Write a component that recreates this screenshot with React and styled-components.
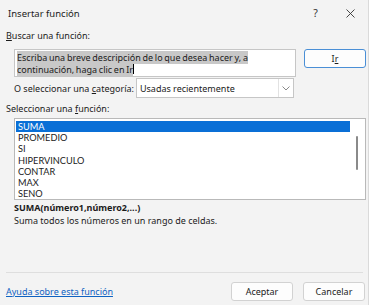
import React, { useState } from "react";
import styled, { createGlobalStyle } from "styled-components";

const GlobalStyle = createGlobalStyle`
  html, body {
    margin: 0;
    padding: 0;
    background: #ffffff;
  }
  body {
    font-family: "Noto Sans", "Open Sans", sans-serif;
    font-size: 9px;
    color: #1b1b1b;
  }
`;

const Styled = {
  Dialog: styled.div`
    width: 369px;
    height: 305px;
    box-sizing: border-box;
    background: #f3f3f3;
    border-right: 1px solid #dadada;
    display: flex;
    flex-direction: column;
  `,
  TitleBar: styled.div`
    height: 26px;
    display: flex;
    align-items: center;
    padding-left: 8px;
    font-size: 9.5px;
    .title {
      flex: 1;
    }
    .ctrl {
      width: 35px;
      display: flex;
      justify-content: center;
      font-size: 10.5px;
      color: #333;
    }
  `,
  Body: styled.div`
    flex: 1;
    display: flex;
    flex-direction: column;
    padding: 0 2px 0 6px;
  `,
  Label: styled.div`
    height: 12px;
    line-height: 12px;
    margin-top: ${({ $top }) => $top || 0}px;
    white-space: nowrap;
    u {
      text-decoration-thickness: 1px;
      text-underline-offset: 1px;
    }
  `,
  SearchRow: styled.div`
    display: flex;
    align-items: flex-start;
    margin-top: 7px;
    padding-left: 8px;
  `,
  SearchBox: styled.div`
    width: 282px;
    height: 28px;
    box-sizing: border-box;
    background: #fff;
    border: 1px solid #c6c6c6;
    padding: 2px 0 0 2px;
    line-height: 11.5px;
    word-spacing: -0.6px;
    .sel {
      background: #c8c8c8;
    }
    .caret {
      display: inline-block;
      width: 1px;
      height: 10px;
      background: #000;
      vertical-align: -1px;
    }
  `,
  Button: styled.button`
    width: 62px;
    height: 19px;
    box-sizing: border-box;
    background: #fdfdfd;
    border: 1px solid ${({ $primary }) => ($primary ? "#4a8fd6" : "#d2d2d2")};
    border-radius: 3px;
    font-family: inherit;
    font-size: 9px;
    color: #1b1b1b;
    padding: 0;
    margin-left: ${({ $gap }) => $gap || 0}px;
    u {
      text-underline-offset: 1px;
    }
  `,
  CategoryRow: styled.div`
    display: flex;
    align-items: center;
    margin-top: 1px;
    padding-left: 8px;
    height: 20px;
    gap: 2px;
  `,
  Select: styled.div`
    width: 158px;
    height: 20px;
    box-sizing: border-box;
    background: #fff;
    border: 1px solid #c6c6c6;
    display: flex;
    align-items: center;
    .value {
      flex: 1;
      padding-left: 3px;
    }
    .arrow {
      width: 14px;
      height: 100%;
      border-left: 1px solid #e2e2e2;
      display: flex;
      align-items: center;
      justify-content: center;
    }
  `,
  ListBox: styled.div`
    margin: 3px 0 0 8px;
    width: 352px;
    height: 82px;
    box-sizing: border-box;
    background: #fff;
    border: 1px solid #b9b9b9;
    display: flex;
    padding: 2px 1px 0 1px;
    overflow: hidden;
  `,
  Items: styled.div`
    flex: 1;
  `,
  Item: styled.div`
    height: 11.2px;
    line-height: 11.2px;
    padding-left: 2px;
    white-space: nowrap;
    font-family: "Lato", "Noto Sans", sans-serif;
    font-size: 9.2px;
    background: ${({ $selected }) => ($selected ? "#0a6fd6" : "transparent")};
    color: ${({ $selected }) => ($selected ? "#ffffff" : "#1b1b1b")};
    cursor: default;
  `,
  ScrollTrack: styled.div`
    width: 14px;
    display: flex;
    justify-content: center;
    padding-top: 15px;
    .thumb {
      width: 2px;
      height: 34px;
      border-radius: 1px;
      background: #8a8a8a;
    }
  `,
  Signature: styled.div`
    margin: 1px 0 0 8px;
    font-weight: 700;
    height: 13px;
    line-height: 13px;
  `,
  Description: styled.div`
    margin: 0 0 0 8px;
    height: 13px;
    line-height: 13px;
  `,
  Separator: styled.div`
    margin-top: auto;
    height: 1px;
    background: #dedede;
    margin-right: 3px;
  `,
  Footer: styled.div`
    display: flex;
    align-items: center;
    height: 32px;
    padding-top: 4px;
    box-sizing: border-box;
    padding-right: 1px;
    a {
      color: #0f62c2;
      text-decoration: underline;
      text-underline-offset: 1px;
      flex: 1;
    }
  `,
};

const functions = ["SUMA", "PROMEDIO", "SI", "HIPERVINCULO", "CONTAR", "MAX", "SENO"];

const App = () => {
  const [selected, setSelected] = useState("SUMA");

  return (
    <>
      <GlobalStyle />
      <Styled.Dialog>
        <Styled.TitleBar>
          <span className="title">Insertar función</span>
          <span className="ctrl">?</span>
          <span className="ctrl">
            <svg width="9" height="9" viewBox="0 0 9 9">
              <path d="M0.5 0.5 L8.5 8.5 M8.5 0.5 L0.5 8.5" stroke="#333" strokeWidth="0.9" fill="none" />
            </svg>
          </span>
        </Styled.TitleBar>
        <Styled.Body>
          <Styled.Label $top={4}>
            <u>B</u>uscar una función:
          </Styled.Label>
          <Styled.SearchRow>
            <Styled.SearchBox>
              <span className="sel">
                Escriba una breve descripción de lo que desea hacer y, a continuación, haga clic en Ir
              </span>
              <span className="caret" />
            </Styled.SearchBox>
            <Styled.Button $primary $gap={8}>
              I<u>r</u>
            </Styled.Button>
          </Styled.SearchRow>
          <Styled.CategoryRow>
            <span>
              O seleccionar una <u>c</u>ategoría:
            </span>
            <Styled.Select>
              <span className="value">Usadas recientemente</span>
              <span className="arrow">
                <svg width="8" height="5" viewBox="0 0 8 5">
                  <path d="M0.5 0.5 L4 4 L7.5 0.5" fill="none" stroke="#8a8a8a" strokeWidth="1" />
                </svg>
              </span>
            </Styled.Select>
          </Styled.CategoryRow>
          <Styled.Label $top={5}>
            Seleccionar una <u>f</u>unción:
          </Styled.Label>
          <Styled.ListBox>
            <Styled.Items>
              {functions.map(fn => (
                <Styled.Item key={fn} $selected={fn === selected} onClick={() => setSelected(fn)}>
                  {fn}
                </Styled.Item>
              ))}
            </Styled.Items>
            <Styled.ScrollTrack>
              <div className="thumb" />
            </Styled.ScrollTrack>
          </Styled.ListBox>
          <Styled.Signature>SUMA(número1,número2,...)</Styled.Signature>
          <Styled.Description>Suma todos los números en un rango de celdas.</Styled.Description>
          <Styled.Separator />
          <Styled.Footer>
            <a href="#">Ayuda sobre esta función</a>
            <Styled.Button>Aceptar</Styled.Button>
            <Styled.Button $gap={10}>Cancelar</Styled.Button>
          </Styled.Footer>
        </Styled.Body>
      </Styled.Dialog>
    </>
  );
};

export default App;
